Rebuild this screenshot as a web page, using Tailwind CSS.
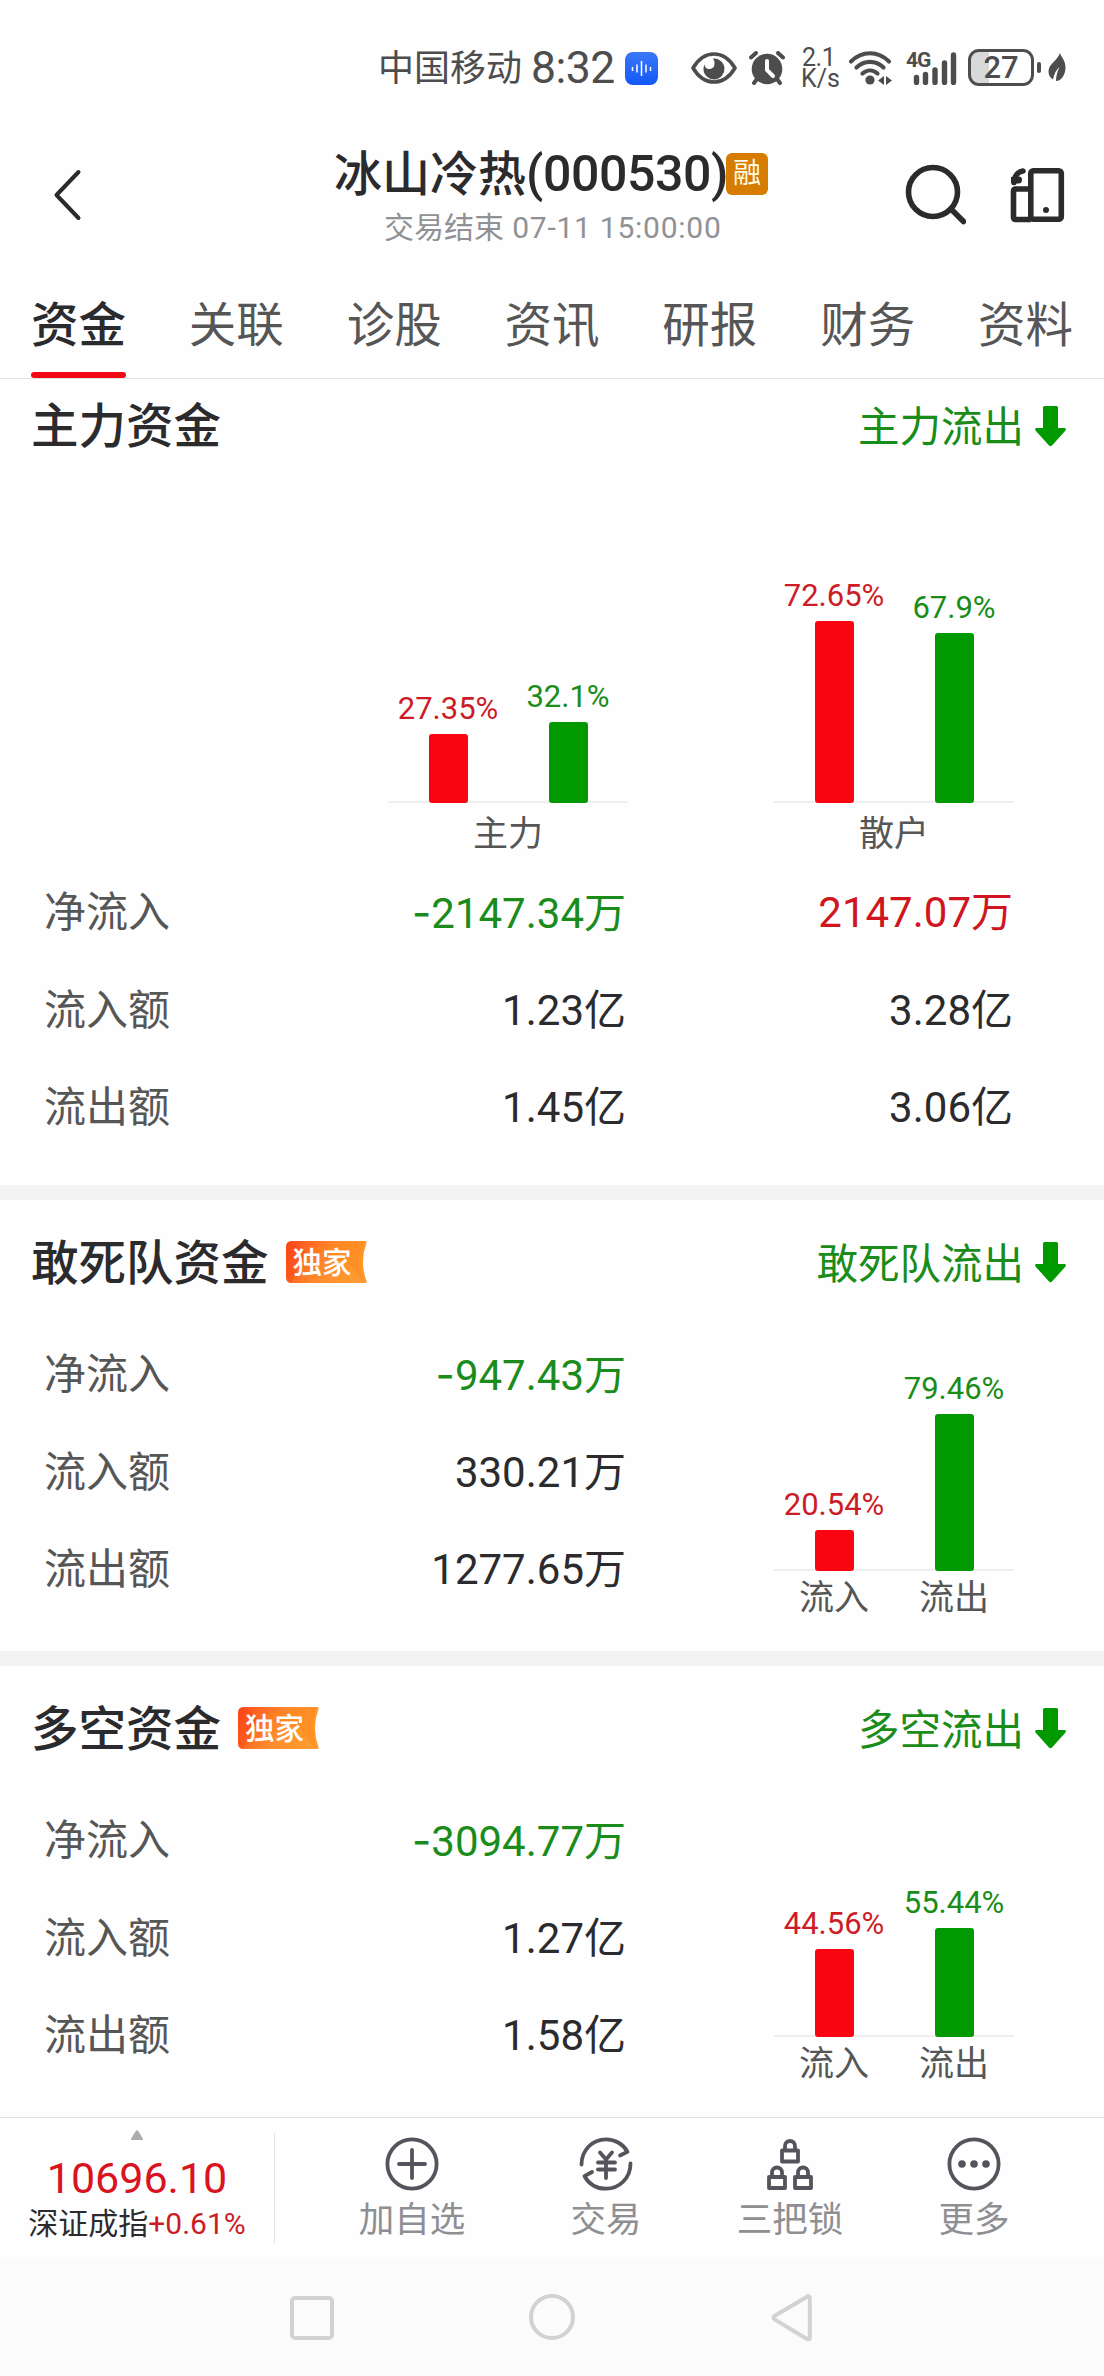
<!DOCTYPE html>
<html lang="zh-CN">
<head>
    <meta charset="UTF-8">
    <meta name="viewport" content="width=device-width, initial-scale=1.0">
    <title>冰山冷热(000530)</title>
    <script src="https://cdn.jsdelivr.net/npm/@tailwindcss/browser@4"></script>
</head>
<body class="bg-[#fefefe] font-['Roboto','Noto_Sans_CJK_SC',sans-serif] text-[#2b2b2d]">
    <div class="w-[1104px] h-[2376px] flex flex-col overflow-hidden">

        <!-- status bar -->
        <div class="h-[134px] pl-[378px] flex items-center text-[#4d4d4d] leading-none whitespace-nowrap flex-shrink-0">
            <span class="text-[36px] w-[153px] mt-[4px]">中国移动</span>
            <span class="text-[44.500px] w-[94px] mt-[2px] tracking-[-0.5px]">8:32</span>
            <svg class="w-[33px] h-[33px] mt-[3px]" viewBox="0 0 33 33">
                <defs><linearGradient id="voice" x1="0" y1="0" x2="0" y2="1"><stop offset="0" stop-color="#3b78f8"/><stop offset="1" stop-color="#1258f6"/></linearGradient></defs>
                <rect width="33" height="33" rx="8" fill="url(#voice)"/>
                <path d="M7.5 15v4M12 12.500v8M16.500 9v15M21 12.500v8M25.500 15v4" stroke="#fff" stroke-width="1.500"/>
            </svg>
            <svg class="w-[46px] h-[32px] ml-[33px] mt-[1px]" viewBox="0 0 46 32">
                <path d="M2 16C8 6 15 2 23 2s15 4 21 14c-6 10-13 14-21 14S8 26 2 16z" fill="none" stroke="currentColor" stroke-width="3.600" stroke-linejoin="round"/>
                <path d="M22 6.500a10.500 10.500 0 1 1-9.500 11c0-2 .3-3.500 1-5 .5 3 2 4.500 4.500 4.500 4 0 5.500-2.500 5.500-5.500 0-2-.5-3.500-1.500-5z" fill="currentColor"/>
            </svg>
            <svg class="w-[36px] h-[34px] ml-[12px] mt-[1px]" viewBox="0 0 36 34">
                <circle cx="18" cy="18" r="15.300" fill="currentColor"/>
                <path d="M2 6.500 7 2M34 6.500 29 2M8 28l-3 4M28 28l3 4" stroke="currentColor" stroke-width="4" stroke-linecap="round"/>
                <path d="M18 10v9l6 6" fill="none" stroke="#fefefe" stroke-width="4" stroke-linecap="round"/>
            </svg>
            <div class="ml-[16px] w-[47px] mt-[2px] text-[25px] leading-[21px] flex flex-col">
                <span class="pl-[1px] tracking-[-0.5px]">2.1</span>
                <span>K/s</span>
            </div>
            <svg class="w-[46px] h-[35px] mt-[1px]" viewBox="0 0 46 35">
                <g fill="none" stroke="currentColor" stroke-width="4.200" stroke-linecap="round">
                    <path d="M3 11.500C14 .5 30 .5 41 11.500M8.500 17.500c8-7.500 19-7.500 27 0M14.500 23.500c4.500-4 10.500-4 15 0"/>
                </g>
                <circle cx="22" cy="30" r="4.600" fill="currentColor"/>
                <path d="M36 26v9l-6-4.500zM38 26v9l6-4.500z" fill="currentColor"/>
            </svg>
            <div class="relative ml-[12px] w-[62px] h-[34px] mt-[1px]">
                <span class="absolute left-0 top-[-1px] text-[21px] leading-[20px] font-bold tracking-[-1px]">4G</span>
                <svg class="w-[52px] h-[34px]" viewBox="0 0 52 34">
                    <path d="M10.500 26.500v5M19.500 23.500v8M29 19v12.500M38.500 12v19.500M47.500 4v27.500" stroke="currentColor" stroke-width="5.400" stroke-linecap="round"/>
                </svg>
            </div>
            <div class="w-[66px] h-[37px] border-[3px] border-[#4d4d4d] rounded-[11px] overflow-hidden flex items-center justify-center bg-linear-to-r from-[#d9d9d9] from-30% to-[#fefefe] to-30% text-[31px] font-medium leading-none">27</div>
            <div class="w-[4px] h-[11px] rounded-full bg-[#4d4d4d] ml-[3px]"></div>
            <svg class="w-[18px] h-[29px] ml-[7px]" viewBox="0 0 18 29">
                <path d="M12 0c1 4 5.500 7 5.500 14.500 0 7-4 13.500-9.500 13.500 0-4 1-9 3.500-14C8 17 6 21.500 5 26.500 2 25 .5 22 .5 18.500.500 11 9 8 12 0z" fill="currentColor"/>
            </svg>
        </div>

        <!-- title bar -->
        <header class="h-[142px] flex items-start flex-shrink-0">
            <svg class="w-[30px] h-[54px] ml-[52px] mt-[34px]" viewBox="0 0 30 54">
                <path d="M26.500 4 4.500 27l22 23" fill="none" stroke="currentColor" stroke-width="4" stroke-linecap="round" stroke-linejoin="round"/>
            </svg>
            <div class="ml-[252px] w-[440px] flex flex-col">
                <h1 class="h-[60px] mt-[10px] flex items-center text-[48px] leading-[60px] font-medium whitespace-nowrap">
                    <span class="w-[192px] mt-[2px]">冰山冷热</span><span class="w-[200px] text-[50px] tracking-[-0.4px]">(000530)</span>
                    <span class="w-[42px] h-[42px] rounded-[6px] bg-[#d67c00] text-[#fffbe0] text-[28px] leading-[41px] text-center font-normal">融</span>
                </h1>
                <p class="mt-[4px] ml-[50px] text-[30px] leading-[40px] text-[#909194] whitespace-nowrap">交易结束<span class="tracking-[0.75px]"> 07-11 15:00:00</span></p>
            </div>
            <svg class="w-[62px] h-[62px] ml-[130px] mt-[30px]" viewBox="0 0 62 62">
                <circle cx="29" cy="28" r="24.500" fill="none" stroke="currentColor" stroke-width="5.600"/>
                <path d="M47 45l12.500 12.500" stroke="currentColor" stroke-width="5.600" stroke-linecap="round"/>
            </svg>
            <svg class="w-[56px] h-[56px] ml-[44px] mt-[33px]" viewBox="0 0 56 56" fill="none" stroke="currentColor" stroke-width="5.600" stroke-linejoin="round">
                <rect x="20.800" y="3.800" width="30.500" height="48.500" rx="2.500"/>
                <path d="M20.800 22H5.500a2 2 0 0 0-2 2v26.500a2 2 0 0 0 2 2h15.300"/>
                <path d="M12.500 4C8 4.500 4 8.500 3.500 15.500" stroke-linecap="round" transform="translate(.5 0)"/>
                <path d="M1 10v5q0 1.500 1.500 1.500H8a3 3 0 0 0 1-7z" fill="currentColor" stroke="none"/>
                <circle cx="36" cy="43" r="3" fill="currentColor" stroke="none"/>
            </svg>
        </header>

        <!-- tabs -->
        <nav class="h-[103px] px-[31px] flex justify-between border-b border-[#e4e4e4] text-[47.500px] leading-[100px] text-[#565656] flex-shrink-0">
            <div class="flex flex-col text-[#2b2b2d] font-medium"><span class="h-[96px]">资金</span><span class="h-[6px] rounded-full bg-[#f10a16]"></span></div>
            <span>关联</span>
            <span>诊股</span>
            <span>资讯</span>
            <span>研报</span>
            <span>财务</span>
            <span>资料</span>
        </nav>

        <!-- 主力资金 -->
        <section class="h-[806px] flex flex-col flex-shrink-0">
            <div class="h-[94px] pl-[31px] pr-[38px] flex items-center">
                <h2 class="mt-[4px] text-[47.500px] leading-none font-medium">主力资金</h2>
                <span class="mt-[3px] ml-auto text-[41.500px] leading-none text-[#1a8c1a]">主力流出</span>
                <svg class="w-[31px] h-[41px] ml-[11px]" viewBox="0 0 31 41"><path d="M9.500 0h12q1.500 0 1.500 1.500V22h6.500q2 0 1 2.500L17 39.500q-1.500 1.500-3 0L.5 24.500q-1-2.500 1-2.500H8V1.500Q8 0 9.500 0z" fill="#009900"/></svg>
            </div>
            <div class="flex pl-[388px] gap-[146px]">
                <div class="w-[240px]">
                    <div class="h-[330px] flex items-end border-b-2 border-[#efefef] text-[31px] leading-[36px]">
                        <div class="w-[120px] -mb-[2px] flex flex-col items-center text-[#cc1c26]"><span class="mb-[7px]">27.35%</span><i class="block w-[39px] rounded-[3px] bg-[#fa0512]" style="height:69px"></i></div>
                        <div class="w-[120px] -mb-[2px] flex flex-col items-center text-[#1a8c1a]"><span class="mb-[7px]">32.1%</span><i class="block w-[39px] rounded-[3px] bg-[#009900]" style="height:81px"></i></div>
                    </div>
                    <p class="h-[60px] text-[35px] leading-[64px] text-center text-[#565656]">主力</p>
                </div>
                <div class="w-[240px]">
                    <div class="h-[330px] flex items-end border-b-2 border-[#efefef] text-[31px] leading-[36px]">
                        <div class="w-[120px] -mb-[2px] flex flex-col items-center text-[#cc1c26]"><span class="mb-[7px]">72.65%</span><i class="block w-[39px] rounded-[3px] bg-[#fa0512]" style="height:182px"></i></div>
                        <div class="w-[120px] -mb-[2px] flex flex-col items-center text-[#1a8c1a]"><span class="mb-[7px]">67.9%</span><i class="block w-[39px] rounded-[3px] bg-[#009900]" style="height:170px"></i></div>
                    </div>
                    <p class="h-[60px] text-[35px] leading-[64px] text-center text-[#565656]">散户</p>
                </div>
            </div>
            <div class="pl-[44px] pt-[1px] text-[42px] leading-[97px]">
                <div class="flex"><span class="w-[182px] text-[#565656]">净流入</span><span class="w-[400px] text-right text-[#1a8c1a]"><span class="font-['Inter']">-</span>2147.34万</span><span class="w-[387px] text-right text-[#cf1620]">2147.07万</span></div>
                <div class="flex"><span class="w-[182px] text-[#565656]">流入额</span><span class="w-[400px] text-right">1.23亿</span><span class="w-[387px] text-right">3.28亿</span></div>
                <div class="flex"><span class="w-[182px] text-[#565656]">流出额</span><span class="w-[400px] text-right">1.45亿</span><span class="w-[387px] text-right">3.06亿</span></div>
            </div>
        </section>

        <div class="h-[15px] bg-[#f3f3f3] flex-shrink-0"></div>

        <!-- 敢死队资金 -->
        <section class="h-[451px] flex flex-col flex-shrink-0">
            <div class="h-[126px] pl-[31px] pr-[38px] flex items-center">
                <h2 class="mt-[4px] text-[47.500px] leading-none font-medium">敢死队资金</h2>
                <div class="relative ml-[17px] -mt-[2px] w-[81px] h-[42px]">
                    <svg class="w-[81px] h-[42px]" viewBox="0 0 81 42">
                        <defs><linearGradient id="tag" x1="0" y1="0" x2="1" y2=".3"><stop offset="0" stop-color="#fb4a1c"/><stop offset=".6" stop-color="#ff8a2c"/><stop offset="1" stop-color="#ff9a30"/></linearGradient></defs>
                        <path d="M6 0h73q2 0 1.500 2-7 19 0 38 .5 2-1.500 2H6q-6 0-6-6V6q0-6 6-6z" fill="url(#tag)"/>
                        <path d="M0 6q0-6 6-6l14 11L5 42q-5 0-5-6z" fill="#f93c14" opacity=".35"/>
                        <path d="M20 8 78 0q-5 20 0 42L60 20z" fill="#ff8412" opacity=".35"/>
                    </svg>
                    <span class="absolute inset-0 pl-[7px] text-[29.500px] leading-[44px] font-medium text-white whitespace-nowrap">独家</span>
                </div>
                <span class="mt-[3px] ml-auto text-[41.500px] leading-none text-[#1a8c1a]">敢死队流出</span>
                <svg class="w-[31px] h-[41px] -mt-[2px] ml-[11px]" viewBox="0 0 31 41"><path d="M9.500 0h12q1.500 0 1.500 1.500V22h6.500q2 0 1 2.500L17 39.500q-1.500 1.500-3 0L.5 24.500q-1-2.500 1-2.500H8V1.500Q8 0 9.500 0z" fill="#009900"/></svg>
            </div>
            <div class="flex pl-[44px]">
                <div class="w-[582px] text-[42px] leading-[97px]">
                    <div class="flex justify-between"><span class="text-[#565656]">净流入</span><span class="text-[#1a8c1a]"><span class="font-['Inter']">-</span>947.43万</span></div>
                    <div class="flex justify-between"><span class="text-[#565656]">流入额</span><span>330.21万</span></div>
                    <div class="flex justify-between"><span class="text-[#565656]">流出额</span><span>1277.65万</span></div>
                </div>
                <div class="ml-[148px] w-[240px]">
                    <div class="h-[245px] flex items-end border-b-2 border-[#efefef] text-[31px] leading-[36px]">
                        <div class="w-[120px] -mb-[2px] flex flex-col items-center text-[#cc1c26]"><span class="mb-[7px]">20.54%</span><i class="block w-[39px] rounded-[3px] bg-[#fa0512]" style="height:41px"></i></div>
                        <div class="w-[120px] -mb-[2px] flex flex-col items-center text-[#1a8c1a]"><span class="mb-[7px]">79.46%</span><i class="block w-[39px] rounded-[3px] bg-[#009900]" style="height:157px"></i></div>
                    </div>
                    <div class="flex text-[35px] leading-[55px] text-[#565656] text-center"><span class="w-1/2">流入</span><span class="w-1/2">流出</span></div>
                </div>
            </div>
        </section>

        <div class="h-[15px] bg-[#f3f3f3] flex-shrink-0"></div>

        <!-- 多空资金 -->
        <section class="h-[451px] flex flex-col flex-shrink-0">
            <div class="h-[126px] pl-[31px] pr-[38px] flex items-center">
                <h2 class="mt-[4px] text-[47.500px] leading-none font-medium">多空资金</h2>
                <div class="relative ml-[17px] -mt-[2px] w-[81px] h-[42px]">
                    <svg class="w-[81px] h-[42px]" viewBox="0 0 81 42">
                        <path d="M6 0h73q2 0 1.500 2-7 19 0 38 .5 2-1.500 2H6q-6 0-6-6V6q0-6 6-6z" fill="url(#tag)"/>
                        <path d="M0 6q0-6 6-6l14 11L5 42q-5 0-5-6z" fill="#f93c14" opacity=".35"/>
                        <path d="M20 8 78 0q-5 20 0 42L60 20z" fill="#ff8412" opacity=".35"/>
                    </svg>
                    <span class="absolute inset-0 pl-[7px] text-[29.500px] leading-[44px] font-medium text-white whitespace-nowrap">独家</span>
                </div>
                <span class="mt-[3px] ml-auto text-[41.500px] leading-none text-[#1a8c1a]">多空流出</span>
                <svg class="w-[31px] h-[41px] -mt-[2px] ml-[11px]" viewBox="0 0 31 41"><path d="M9.500 0h12q1.500 0 1.500 1.500V22h6.500q2 0 1 2.500L17 39.500q-1.500 1.500-3 0L.5 24.500q-1-2.500 1-2.500H8V1.500Q8 0 9.500 0z" fill="#009900"/></svg>
            </div>
            <div class="flex pl-[44px]">
                <div class="w-[582px] text-[42px] leading-[97px]">
                    <div class="flex justify-between"><span class="text-[#565656]">净流入</span><span class="text-[#1a8c1a]"><span class="font-['Inter']">-</span>3094.77万</span></div>
                    <div class="flex justify-between"><span class="text-[#565656]">流入额</span><span>1.27亿</span></div>
                    <div class="flex justify-between"><span class="text-[#565656]">流出额</span><span>1.58亿</span></div>
                </div>
                <div class="ml-[148px] w-[240px]">
                    <div class="h-[245px] flex items-end border-b-2 border-[#efefef] text-[31px] leading-[36px]">
                        <div class="w-[120px] -mb-[2px] flex flex-col items-center text-[#cc1c26]"><span class="mb-[7px]">44.56%</span><i class="block w-[39px] rounded-[3px] bg-[#fa0512]" style="height:88px"></i></div>
                        <div class="w-[120px] -mb-[2px] flex flex-col items-center text-[#1a8c1a]"><span class="mb-[7px]">55.44%</span><i class="block w-[39px] rounded-[3px] bg-[#009900]" style="height:109px"></i></div>
                    </div>
                    <div class="flex text-[35px] leading-[55px] text-[#565656] text-center"><span class="w-1/2">流入</span><span class="w-1/2">流出</span></div>
                </div>
            </div>
        </section>

        <!-- bottom toolbar -->
        <footer class="h-[142px] flex border-t border-[#e2e2e2] text-[35.500px] text-[#8f8f93] flex-shrink-0">
            <div class="w-[275px] h-[111px] mt-[15px] border-r border-[#e4e4e4] flex flex-col items-center whitespace-nowrap">
                <svg class="w-[12px] h-[10px] -mt-[3px]" viewBox="0 0 12 10"><path d="M4.800 1Q6-.6 7.200 1l4.600 7.500q.5 1.500-1 1.500H1.200Q-.300 10 .2 8.500z" fill="#acacae"/></svg>
                <span class="mt-[13px] text-[43px] leading-[50px] text-[#d91420]">10696.10</span>
                <span class="mt-[1px] text-[30px] leading-[40px] text-[#2b2b2d]">深证成指<span class="text-[#cc1c26]">+0.61%</span></span>
            </div>
            <div class="pl-[83px] pt-[19px] flex items-start leading-[50px]">
                <div class="w-[108px] flex flex-col items-center">
                    <svg class="w-[54px] h-[56px]" viewBox="0 0 54 56" fill="none" stroke="#54555c" stroke-width="3.800" stroke-linecap="round"><circle cx="27" cy="27" r="24.600"/><path d="M14 27h26M27 13v28"/></svg>
                    <span class="mt-[2px]">加自选</span>
                </div>
                <div class="w-[72px] ml-[104px] flex flex-col items-center">
                    <svg class="w-[54px] h-[56px]" viewBox="0 0 54 56" fill="none" stroke="#54555c" stroke-width="3.800" stroke-linecap="round" stroke-linejoin="round">
                        <path d="M2.500 27.500C2.500 13 13.500 2.300 27 2.300c9 0 17.500 5 21.500 12.500L41 18.500M51.500 26.500C51.500 41 40.500 51.700 27 51.700c-9 0-17-4.500-21.500-12.500L13 35"/>
                        <path d="M21 15.500l6 7 6-7M19 25.500h17M19 32.500h17M27 23v18"/>
                    </svg>
                    <span class="mt-[2px]">交易</span>
                </div>
                <div class="w-[108px] ml-[94px] flex flex-col items-center">
                    <svg class="w-[54px] h-[56px]" viewBox="0 0 54 56" fill="none" stroke="#54555c" stroke-width="3.800" stroke-linejoin="round">
                        <rect x="19" y="13.500" width="16" height="11"/><path d="M22 13V9a5 5 0 0 1 10 0v4"/>
                        <rect x="6" y="40" width="16" height="11"/><path d="M9 40v-4.500a5 5 0 0 1 10 0V40"/>
                        <rect x="32" y="40" width="16" height="11"/><path d="M35 40v-4.500a5 5 0 0 1 10 0V40"/>
                    </svg>
                    <span class="mt-[2px]">三把锁</span>
                </div>
                <div class="w-[72px] ml-[94px] flex flex-col items-center">
                    <svg class="w-[54px] h-[56px]" viewBox="0 0 54 56"><circle cx="27" cy="27" r="24.600" fill="none" stroke="#54555c" stroke-width="3.800"/><g fill="#54555c"><circle cx="15" cy="27" r="3.800"/><circle cx="27" cy="27" r="3.800"/><circle cx="39" cy="27" r="3.800"/></g></svg>
                    <span class="mt-[2px]">更多</span>
                </div>
            </div>
        </footer>

        <!-- system navigation -->
        <div class="h-[117px] bg-[#fbfbfb] pl-[290px] flex items-start flex-shrink-0">
            <div class="w-[44px] h-[44px] mt-[37px] border-4 border-[#d2d2d2] rounded-[5px]"></div>
            <div class="w-[46px] h-[46px] mt-[35px] ml-[195px] border-4 border-[#d2d2d2] rounded-full"></div>
            <svg class="w-[42px] h-[48px] mt-[35px] ml-[196px]" viewBox="0 0 42 48"><path d="M38.500 2.800Q37.500 1.500 36 2.700L3.500 22q-2 1.700 0 3.400L36 45q2.800 1 2.800-1V4.300z" fill="none" stroke="#d2d2d2" stroke-width="4" stroke-linejoin="round"/></svg>
        </div>
    </div>
</body>
</html>
